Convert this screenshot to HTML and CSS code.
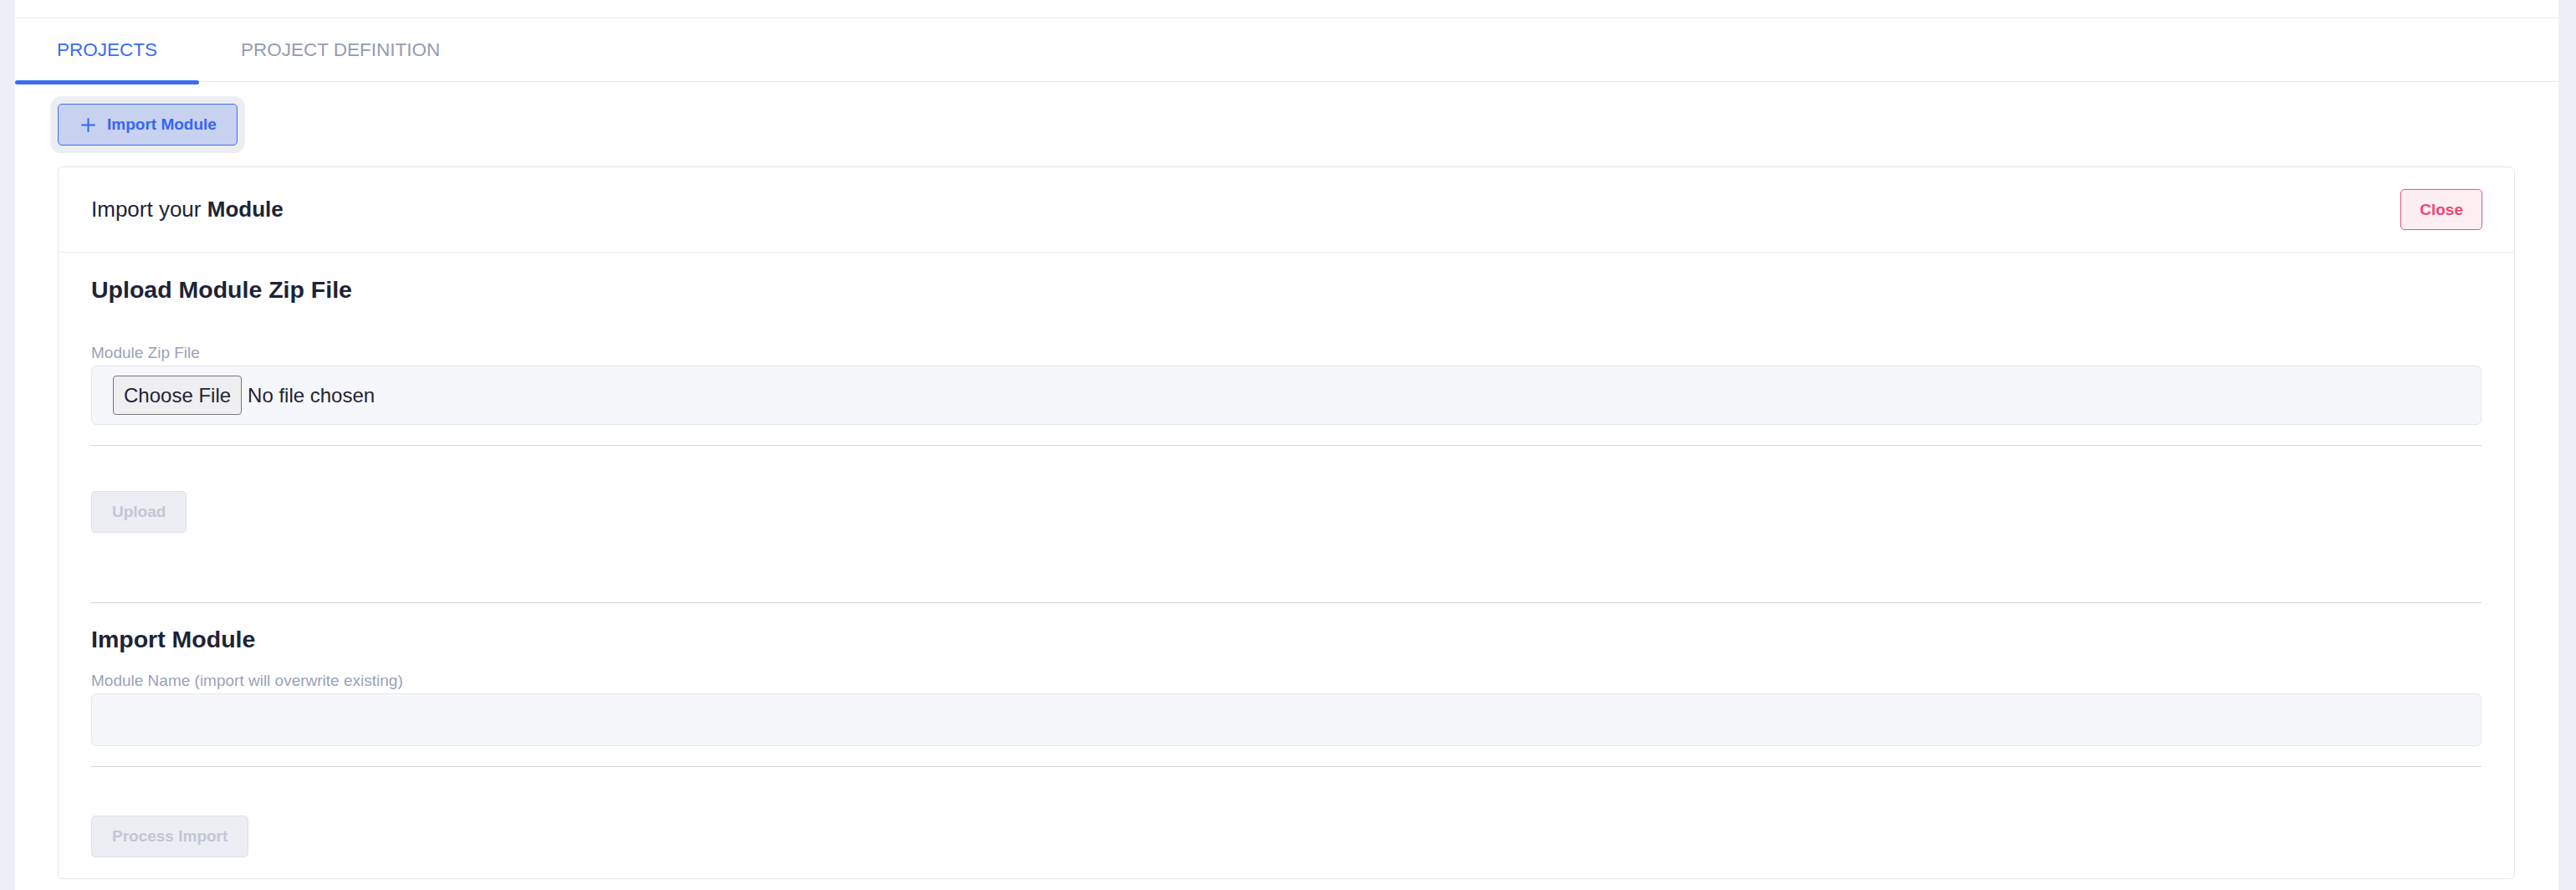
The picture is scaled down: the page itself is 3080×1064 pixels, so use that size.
FILE: index.html
```html
<!DOCTYPE html>
<html lang="en">
<head>
    <meta charset="UTF-8">
    <meta name="viewport" content="width=device-width, initial-scale=1.0">
    <title>Projects - Import Module</title>
    <link rel="stylesheet" href="styles.css">
</head>
<body>
    <div class="page">
        <div class="topbar"></div>

        <nav class="tabs">
            <a class="tab active" href="#">Projects</a>
            <a class="tab" href="#">Project Definition</a>
        </nav>

        <div class="content">
            <div class="toolbar">
                <button class="btn-import">
                    <svg class="icon-plus" width="17" height="17" viewBox="0 0 17 17">
                        <path d="M8.5 1v15M1 8.5h15" stroke="currentColor" stroke-width="2" stroke-linecap="round" fill="none"/>
                    </svg>
                    Import Module
                </button>
            </div>

            <div class="card">
                <div class="card-header">
                    <span class="card-title">Import your <b>Module</b></span>
                    <button class="btn-close">Close</button>
                </div>

                <div class="card-body">
                    <h3 class="section-title">Upload Module Zip File</h3>
                    <div class="form-group first">
                        <label for="zip-file">Module Zip File</label>
                        <input type="file" id="zip-file" class="file-input">
                    </div>
                    <hr class="divider">
                    <button class="btn-disabled btn-upload" disabled>Upload</button>

                    <hr class="divider section-end">

                    <h3 class="section-title second">Import Module</h3>
                    <div class="form-group">
                        <label for="module-name">Module Name (import will overwrite existing)</label>
                        <input type="text" id="module-name" class="text-input">
                    </div>
                    <hr class="divider">
                    <button class="btn-disabled btn-process" disabled>Process Import</button>
                </div>
            </div>
        </div>
    </div>
</body>
</html>
```

FILE: styles.css
```css
body {
    font-family: "Liberation Sans", Arial, sans-serif;
    margin: 0;
    padding: 0;
    background-color: #eceff5;
    color: #1d2436;
}
.page {
    margin: 0 21px 0 18px;
    background-color: #fff;
    min-height: 100vh;
}
.topbar {
    height: 21px;
    border-bottom: 1px solid #e9ebef;
}
.tabs {
    display: flex;
    height: 75px;
    border-bottom: 1px solid #e9ebef;
}
.tab {
    position: relative;
    display: flex;
    align-items: center;
    padding: 0 50px;
    font-size: 22.5px;
    text-transform: uppercase;
    text-decoration: none;
    color: #939cb4;
}
.tab.active {
    color: #3a6cf4;
}
.tab.active::after {
    content: "";
    position: absolute;
    left: 0;
    right: 0;
    bottom: -4px;
    height: 5px;
    border-radius: 3px;
    background-color: #3a6cf4;
}
.content {
    padding: 26px 52px 0 51px;
}
.toolbar {
    display: flex;
    margin-bottom: 25px;
}
.btn-import {
    display: flex;
    align-items: center;
    gap: 14px;
    height: 50px;
    padding: 0 24px 0 27px;
    font-family: inherit;
    font-size: 19px;
    font-weight: bold;
    color: #3566f0;
    background-color: #c7d1f0;
    border: 1px solid #3f6ef3;
    border-radius: 5px;
    box-shadow: 0 0 0 9px #eceef3;
    cursor: pointer;
}
.icon-plus {
    display: block;
}
.card {
    border: 1px solid #e5e7ee;
    border-radius: 6px;
    background-color: #fff;
}
.card-header {
    display: flex;
    align-items: center;
    justify-content: space-between;
    height: 101px;
    padding: 0 38px 0 39px;
    border-bottom: 1px solid #e9ebef;
}
.card-title {
    font-size: 26px;
    color: #1d2436;
}
.btn-close {
    height: 49px;
    padding: 0 22px;
    font-family: inherit;
    font-size: 19px;
    font-weight: bold;
    color: #f0456f;
    background-color: #fdeef2;
    border: 1px solid #f0507a;
    border-radius: 5px;
    cursor: pointer;
}
.card-body {
    padding: 27px 39px 25px;
}
.section-title {
    margin: 0;
    font-size: 28.5px;
    line-height: 34px;
    font-weight: bold;
    color: #1d2436;
}
.section-title.second {
    margin-top: 26px;
}
.form-group {
    margin-top: 21px;
}
.form-group.first {
    margin-top: 47px;
}
.form-group label {
    display: block;
    font-size: 19px;
    line-height: 24px;
    margin-bottom: 3px;
    color: #9aa2b9;
}
.file-input,
.text-input {
    display: block;
    box-sizing: border-box;
    width: 100%;
    background-color: #f6f7fb;
    border: 1px solid #e3e6ee;
    border-radius: 6px;
    font-family: inherit;
    font-size: 24px;
    color: #1f2433;
}
.file-input {
    height: 71px;
    padding: 11px 25px;
}
.file-input::file-selector-button {
    height: 47px;
    margin-right: 7px;
    padding: 0 12px;
    font-family: inherit;
    font-size: 24px;
    color: #1f2433;
    background-color: #efeff2;
    border: 1px solid #777;
    border-radius: 4px;
}
.text-input {
    height: 63px;
    padding: 0 20px;
    outline: none;
}
.divider {
    border: none;
    border-top: 1px solid #d2d4de;
    margin: 24px 0 0;
}
.divider.section-end {
    margin-top: 83px;
}
.btn-disabled {
    display: block;
    height: 50px;
    padding: 0 24px;
    font-family: inherit;
    font-size: 19px;
    font-weight: bold;
    color: #c2c6d4;
    background-color: #eceef3;
    border: 1px solid #dde0ea;
    border-radius: 5px;
}
.btn-upload {
    margin-top: 54px;
}
.btn-process {
    margin-top: 58px;
}
```
